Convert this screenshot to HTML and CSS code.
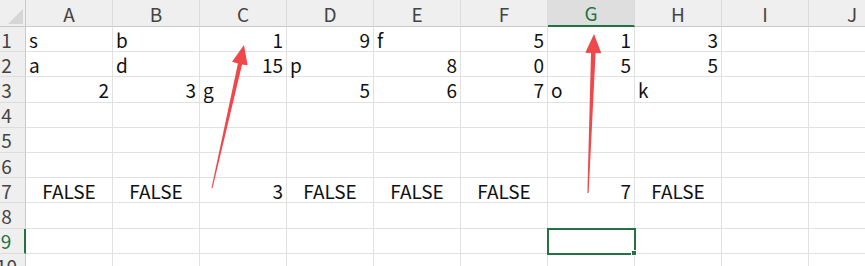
FILE: index.html
```html
<!DOCTYPE html>
<html lang="en">
<head>
    <meta charset="UTF-8">
    <title>Sheet1</title>
    <link rel="stylesheet" href="styles.css">
</head>
<body>
    <div class="sheet">
        <!-- column headers -->
        <div class="corner"><span class="corner-mark"></span></div>
        <div class="col-head">A</div>
        <div class="col-head">B</div>
        <div class="col-head">C</div>
        <div class="col-head">D</div>
        <div class="col-head">E</div>
        <div class="col-head">F</div>
        <div class="col-head active">G</div>
        <div class="col-head">H</div>
        <div class="col-head">I</div>
        <div class="col-head">J</div>

        <!-- row 1 -->
        <div class="row-head">1</div>
        <div class="cell">s</div>
        <div class="cell">b</div>
        <div class="cell num">1</div>
        <div class="cell num">9</div>
        <div class="cell">f</div>
        <div class="cell num">5</div>
        <div class="cell num">1</div>
        <div class="cell num">3</div>
        <div class="cell"></div>
        <div class="cell"></div>

        <!-- row 2 -->
        <div class="row-head">2</div>
        <div class="cell">a</div>
        <div class="cell">d</div>
        <div class="cell num">15</div>
        <div class="cell">p</div>
        <div class="cell num">8</div>
        <div class="cell num">0</div>
        <div class="cell num">5</div>
        <div class="cell num">5</div>
        <div class="cell"></div>
        <div class="cell"></div>

        <!-- row 3 -->
        <div class="row-head">3</div>
        <div class="cell num">2</div>
        <div class="cell num">3</div>
        <div class="cell">g</div>
        <div class="cell num">5</div>
        <div class="cell num">6</div>
        <div class="cell num">7</div>
        <div class="cell">o</div>
        <div class="cell">k</div>
        <div class="cell"></div>
        <div class="cell"></div>

        <!-- rows 4-6 -->
        <div class="row-head">4</div>
        <div class="cell"></div><div class="cell"></div><div class="cell"></div><div class="cell"></div><div class="cell"></div>
        <div class="cell"></div><div class="cell"></div><div class="cell"></div><div class="cell"></div><div class="cell"></div>
        <div class="row-head">5</div>
        <div class="cell"></div><div class="cell"></div><div class="cell"></div><div class="cell"></div><div class="cell"></div>
        <div class="cell"></div><div class="cell"></div><div class="cell"></div><div class="cell"></div><div class="cell"></div>
        <div class="row-head">6</div>
        <div class="cell"></div><div class="cell"></div><div class="cell"></div><div class="cell"></div><div class="cell"></div>
        <div class="cell"></div><div class="cell"></div><div class="cell"></div><div class="cell"></div><div class="cell"></div>

        <!-- row 7 -->
        <div class="row-head">7</div>
        <div class="cell bool">FALSE</div>
        <div class="cell bool">FALSE</div>
        <div class="cell num">3</div>
        <div class="cell bool">FALSE</div>
        <div class="cell bool">FALSE</div>
        <div class="cell bool">FALSE</div>
        <div class="cell num">7</div>
        <div class="cell bool">FALSE</div>
        <div class="cell"></div>
        <div class="cell"></div>

        <!-- row 8 -->
        <div class="row-head">8</div>
        <div class="cell"></div><div class="cell"></div><div class="cell"></div><div class="cell"></div><div class="cell"></div>
        <div class="cell"></div><div class="cell"></div><div class="cell"></div><div class="cell"></div><div class="cell"></div>

        <!-- row 9, G9 selected -->
        <div class="row-head active">9</div>
        <div class="cell"></div><div class="cell"></div><div class="cell"></div><div class="cell"></div><div class="cell"></div>
        <div class="cell"></div>
        <div class="cell selected"><span class="fill-handle"></span></div>
        <div class="cell"></div><div class="cell"></div><div class="cell"></div>

        <!-- row 10 -->
        <div class="row-head">10</div>
        <div class="cell"></div><div class="cell"></div><div class="cell"></div><div class="cell"></div><div class="cell"></div>
        <div class="cell"></div><div class="cell"></div><div class="cell"></div><div class="cell"></div><div class="cell"></div>
    </div>

    <!-- annotation arrows drawn over the sheet -->
    <svg class="arrows" width="865" height="266" viewBox="0 0 865 266">
        <polygon points="244,45 232,61.7 237.9,63.5 211.5,188 212.5,188.2 242.1,64.5 247.6,65.3" fill="#f0474a"/>
        <polygon points="594,34 585.3,52.7 591,52.9 587.4,193 588.6,193 595.6,53.1 601.3,53.3" fill="#f0474a"/>
    </svg>
</body>
</html>
```

FILE: styles.css
```css
html, body {
    margin: 0;
    padding: 0;
    background: #fff;
    overflow: hidden;
}
body {
    width: 865px;
    height: 266px;
    position: relative;
    font-family: "Noto Sans CJK SC", "Noto Sans", sans-serif;
    font-size: 19px;
    color: #111;
}
.sheet {
    display: grid;
    grid-template-columns: 26px repeat(10, 87px);
    grid-template-rows: 27px;
    grid-auto-rows: 25.2px;
}
.sheet > div {
    box-sizing: border-box;
    border-right: 1px solid #e1e1e1;
    border-bottom: 1px solid #e1e1e1;
    display: flex;
    align-items: center;
    white-space: nowrap;
    line-height: 1;
}
.corner {
    background: #efefef;
    position: relative;
    border-right-color: #c9c9c9 !important;
    border-bottom-color: #c9c9c9 !important;
}
.corner-mark {
    position: absolute;
    right: 2px;
    bottom: 2px;
    width: 0;
    height: 0;
    border-left: 15px solid transparent;
    border-bottom: 15px solid #d6d6d6;
}
.col-head {
    background: #efefef;
    color: #444;
    justify-content: center;
    border-bottom-color: #c9c9c9 !important;
    border-right-color: #dcdcdc !important;
}
.col-head.active {
    background: #dedede;
    color: #217346;
    border-bottom: 2px solid #217346 !important;
}
.row-head {
    background: #efefef;
    color: #444;
    justify-content: center;
    padding-right: 12px;
    border-right-color: #c9c9c9 !important;
    border-bottom-color: #dcdcdc !important;
}
.row-head.active {
    color: #217346;
    border-right: 2px solid #217346 !important;
}
.cell {
    padding: 0 3px;
}
.cell.num {
    justify-content: flex-end;
}
.cell.bool {
    justify-content: center;
}
.cell.selected {
    position: relative;
    outline: 2px solid #217346;
    outline-offset: -1px;
    z-index: 1;
}
.fill-handle {
    position: absolute;
    right: -3px;
    bottom: -3px;
    width: 4px;
    height: 4px;
    background: #217346;
    border: 1px solid #fff;
}
.arrows {
    position: absolute;
    left: 0;
    top: 0;
    pointer-events: none;
    z-index: 2;
}
```
